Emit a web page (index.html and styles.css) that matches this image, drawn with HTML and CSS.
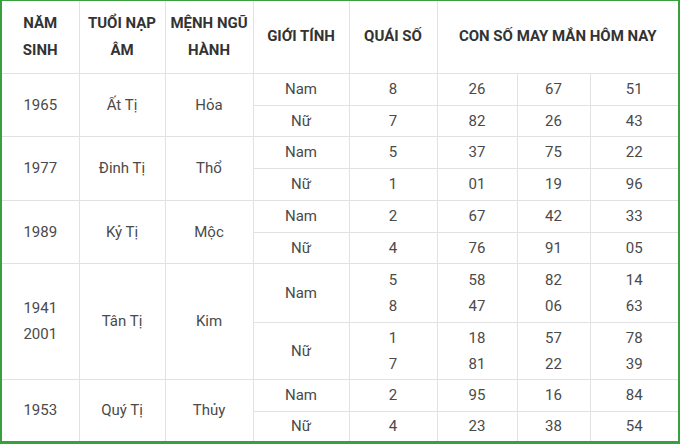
FILE: index.html
```html
<!DOCTYPE html>
<html lang="vi">
<head>
<meta charset="utf-8">
<title>Con số may mắn</title>
<link rel="stylesheet" href="styles.css">
</head>
<body>
<div class="frame">
<table class="lucky">
<colgroup>
<col class="c1"><col class="c2"><col class="c3"><col class="c4"><col class="c5"><col class="c6"><col class="c7"><col class="c8">
</colgroup>
<thead>
<tr class="head">
<th>NĂM<br>SINH</th>
<th>TUỔI NẠP<br>ÂM</th>
<th>MỆNH NGŨ<br>HÀNH</th>
<th>GIỚI TÍNH</th>
<th>QUÁI SỐ</th>
<th colspan="3">CON SỐ MAY MẮN HÔM NAY</th>
</tr>
</thead>
<tbody>
<tr class="r32"><td rowspan="2">1965</td><td rowspan="2">Ất Tị</td><td rowspan="2">Hỏa</td><td>Nam</td><td>8</td><td>26</td><td>67</td><td>51</td></tr>
<tr class="r31"><td>Nữ</td><td>7</td><td>82</td><td>26</td><td>43</td></tr>
<tr class="r32"><td rowspan="2">1977</td><td rowspan="2">Đinh Tị</td><td rowspan="2">Thổ</td><td>Nam</td><td>5</td><td>37</td><td>75</td><td>22</td></tr>
<tr class="r32"><td>Nữ</td><td>1</td><td>01</td><td>19</td><td>96</td></tr>
<tr class="r32"><td rowspan="2">1989</td><td rowspan="2">Kỷ Tị</td><td rowspan="2">Mộc</td><td>Nam</td><td>2</td><td>67</td><td>42</td><td>33</td></tr>
<tr class="r31"><td>Nữ</td><td>4</td><td>76</td><td>91</td><td>05</td></tr>
<tr class="r59"><td rowspan="2">1941<br>2001</td><td rowspan="2">Tân Tị</td><td rowspan="2">Kim</td><td>Nam</td><td>5<br>8</td><td>58<br>47</td><td>82<br>06</td><td>14<br>63</td></tr>
<tr class="r57"><td>Nữ</td><td>1<br>7</td><td>18<br>81</td><td>57<br>22</td><td>78<br>39</td></tr>
<tr class="r32"><td rowspan="2">1953</td><td rowspan="2">Quý Tị</td><td rowspan="2">Thủy</td><td>Nam</td><td>2</td><td>95</td><td>16</td><td>84</td></tr>
<tr class="r30"><td>Nữ</td><td>4</td><td>23</td><td>38</td><td>54</td></tr>
</tbody>
</table>
</div>
</body>
</html>
```
FILE: styles.css
```css
html, body {
  margin: 0;
  padding: 0;
  background: #ffffff;
}
.frame {
  width: 680px;
  box-sizing: border-box;
  border-left: 2px solid #38a13e;
  border-right: 2px solid #38a13e;
  border-top: 1px solid #38a13e;
  border-bottom: 3px solid #38a13e;
  background: #ffffff;
}
.lucky {
  width: 676px;
  table-layout: fixed;
  border-collapse: collapse;
  border-style: hidden;
  font-family: Roboto, "Noto Sans", "Liberation Sans", sans-serif;
  font-size: 15px;
  line-height: 26px;
  color: #4a4a4a;
}
.c1 { width: 77px; }
.c2 { width: 86px; }
.c3 { width: 88px; }
.c4 { width: 96px; }
.c5 { width: 88px; }
.c6 { width: 80px; }
.c7 { width: 73px; }
.c8 { width: 88px; }
.lucky th,
.lucky td {
  border: 1px solid #e2e2e2;
  padding: 0;
  text-align: center;
  vertical-align: middle;
}
.lucky th {
  font-weight: 700;
  line-height: 27px;
  color: #333333;
}
.head { height: 72px; }
.r32 { height: 32px; }
.r31 { height: 31px; }
.r30 { height: 30px; }
.r59 { height: 59px; }
.r57 { height: 57px; }
```
